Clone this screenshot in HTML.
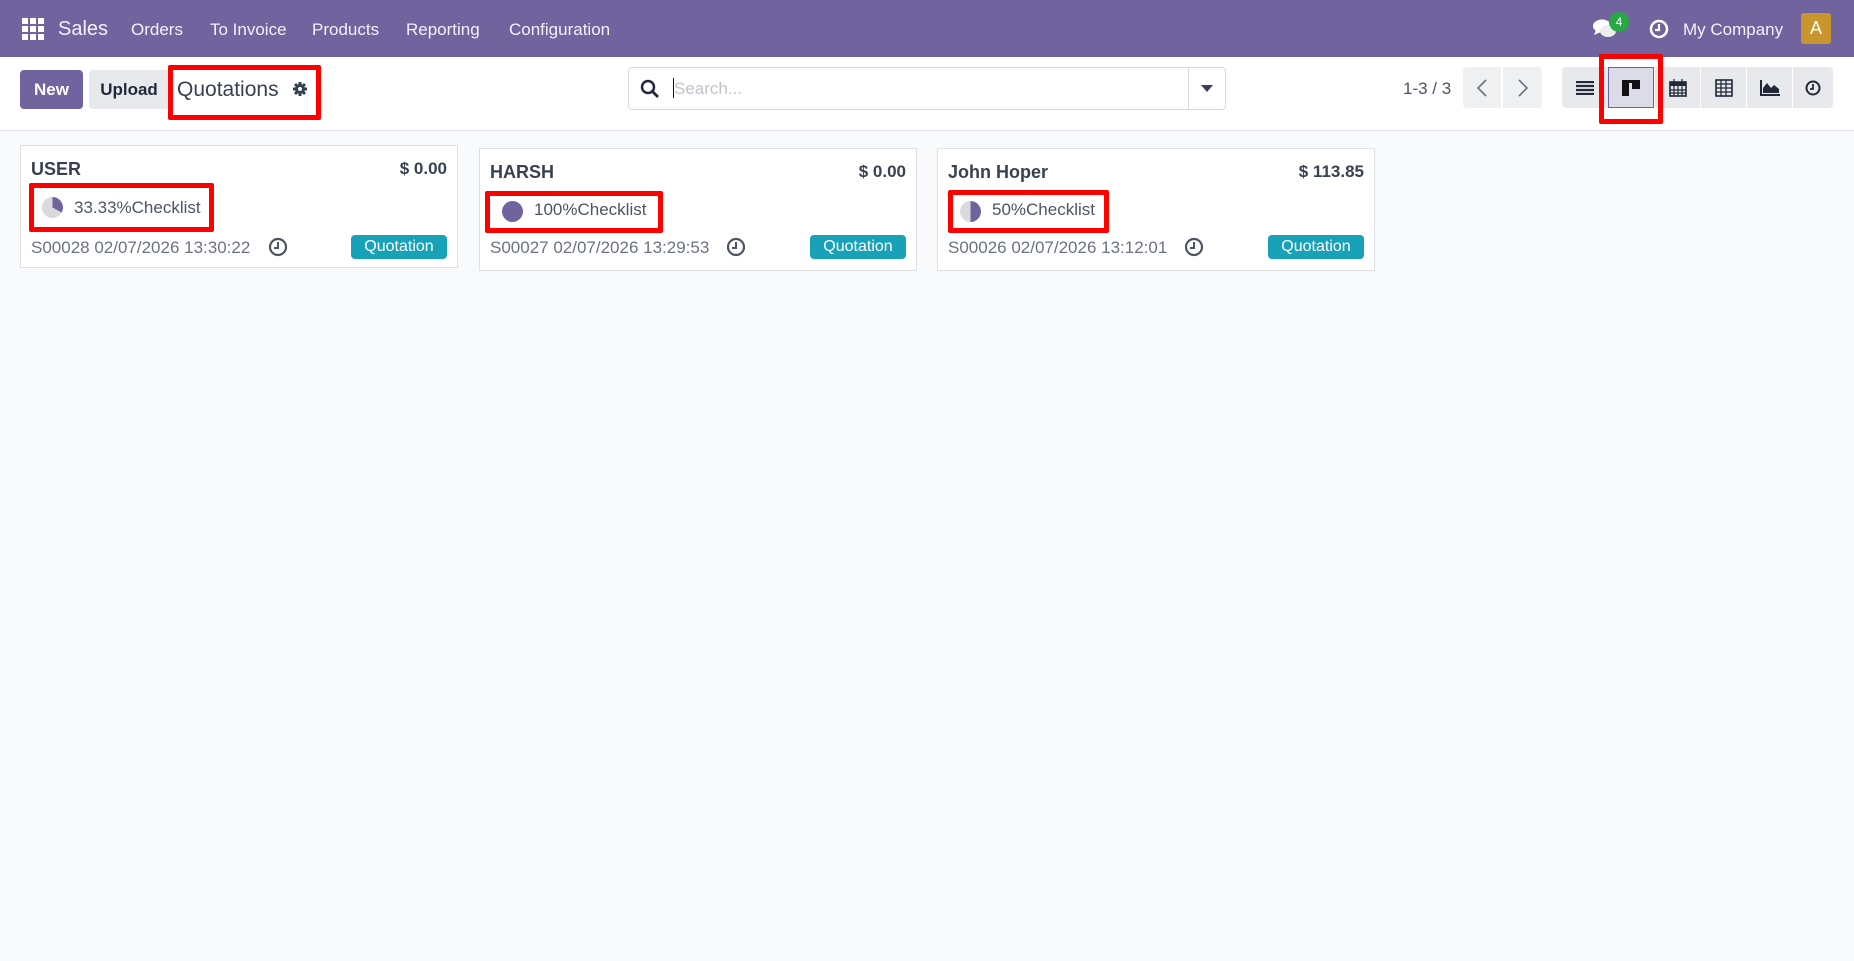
<!DOCTYPE html>
<html><head><meta charset="utf-8"><style>
*{box-sizing:border-box;margin:0;padding:0}
body{width:1854px;height:961px;background:#f9fafb;font-family:"Liberation Sans",sans-serif;position:relative;overflow:hidden;color:#374151}
.a{position:absolute}
.nav{left:0;top:0;width:1854px;height:57px;background:#71639e;color:#fff}
.nav span{position:absolute;top:20px;font-size:17px;color:#f3f0f8}
.cp{left:0;top:57px;width:1854px;height:74px;background:#fff;border-bottom:1px solid #dee2e6}
.btn{position:absolute;border-radius:4px;font-size:17px;font-weight:bold;display:flex;align-items:center;justify-content:center}
.red{position:absolute;border:5px solid #f00;border-radius:2px}
.card{position:absolute;background:#fff;border:1px solid #dcdfe3;width:438px;height:123px}
.card .n{position:absolute;left:10px;top:13px;font-size:18px;font-weight:bold;color:#374151}
.card .p{position:absolute;right:10px;top:13px;font-size:17px;font-weight:bold;color:#374151}
.card .c{position:absolute;left:54px;top:51px;font-size:17px;color:#4b5563}
.card .d{position:absolute;left:10px;top:89px;font-size:17px;color:#6b7280}
.card .q{position:absolute;right:10px;top:86px;width:96px;height:24px;background:#17a2b8;color:#fff;font-size:16px;border-radius:4px;text-align:center;line-height:24px}
.pie{position:absolute;left:22px;top:52px;width:21px;height:21px;border-radius:50%}
.vb{position:absolute;top:67px;height:41px;width:45px;background:#e7e9ed;display:flex;align-items:center;justify-content:center}
</style></head><body>
<div class="a nav">
<svg class="a" style="left:22px;top:18px" width="22" height="22" viewBox="0 0 22 22" fill="#fff"><rect x="0" y="0" width="6" height="6"/><rect x="8" y="0" width="6" height="6"/><rect x="16" y="0" width="6" height="6"/><rect x="0" y="8" width="6" height="6"/><rect x="8" y="8" width="6" height="6"/><rect x="16" y="8" width="6" height="6"/><rect x="0" y="16" width="6" height="6"/><rect x="8" y="16" width="6" height="6"/><rect x="16" y="16" width="6" height="6"/></svg>
<span style="left:58px;top:18px;font-size:20px">Sales</span>
<span style="left:131px">Orders</span>
<span style="left:210px">To Invoice</span>
<span style="left:312px">Products</span>
<span style="left:406px">Reporting</span>
<span style="left:509px">Configuration</span>
<svg class="a" style="left:1593px;top:18px" width="24" height="22" viewBox="0 0 24 22" fill="#fff"><ellipse cx="9" cy="8" rx="9" ry="6.5"/><path d="M3 12 L1 17 L8 14Z"/><ellipse cx="15" cy="13" rx="8" ry="6" fill="#eee"/></svg>
<div class="a" style="left:1609px;top:12px;width:20px;height:20px;border-radius:50%;background:#28a745;color:#fff;font-size:12px;text-align:center;line-height:20px">4</div>
<svg class="a" style="left:1649px;top:19px" width="20" height="20" viewBox="0 0 20 20"><circle cx="10" cy="10" r="8" fill="none" stroke="#fff" stroke-width="2.5"/><path d="M10 5v6H6" fill="none" stroke="#fff" stroke-width="2.2"/></svg>
<span style="left:1683px">My Company</span>
<div class="a" style="left:1801px;top:13px;width:30px;height:31px;background:#c8962c;border-radius:3px;color:#fff;font-size:18px;text-align:center;line-height:31px">A</div>
</div>
<div class="a cp"></div>
<div class="btn" style="left:20px;top:70px;width:63px;height:39px;background:#71639e;color:#fff">New</div>
<div class="btn" style="left:89px;top:70px;width:80px;height:39px;background:#e7e9ed;color:#1f2937;border-radius:4px 0 0 4px">Upload</div>
<div class="red" style="left:168px;top:65px;width:153px;height:55px"></div>
<div class="a" style="left:177px;top:78px;font-size:21px;color:#374151">Quotations</div>
<svg class="a" style="left:292px;top:81px" width="16" height="16" viewBox="0 0 16 16"><circle cx="8" cy="8" r="5" fill="#374151"/><g stroke="#374151" stroke-width="3"><path d="M8 1v14M1 8h14M3 3l10 10M13 3L3 13"/></g><circle cx="8" cy="8" r="2" fill="#fff"/></svg>
<div class="a" style="left:628px;top:67px;width:598px;height:43px;border:1px solid #d8dadd;border-radius:4px;background:#fff"></div>
<div class="a" style="left:1188px;top:68px;width:1px;height:41px;background:#d8dadd"></div>
<svg class="a" style="left:640px;top:79px" width="20" height="20" viewBox="0 0 20 20"><circle cx="8" cy="8" r="6" fill="none" stroke="#1f2937" stroke-width="2.5"/><path d="M12.5 12.5L18 18" stroke="#1f2937" stroke-width="2.8"/></svg>
<div class="a" style="left:673px;top:78px;width:1px;height:20px;background:#111"></div>
<div class="a" style="left:674px;top:79px;font-size:17px;color:#c0c4c9">Search...</div>
<svg class="a" style="left:1201px;top:85px" width="12" height="7"><path d="M0 0h12L6 7Z" fill="#374151"/></svg>
<div class="a" style="left:1403px;top:79px;font-size:17px;color:#4b5563">1-3 / 3</div>
<div class="a" style="left:1463px;top:67px;width:38px;height:41px;background:#eef0f2;border-radius:4px 0 0 4px"></div>
<div class="a" style="left:1503px;top:67px;width:39px;height:41px;background:#eef0f2;border-radius:0 4px 4px 0"></div>
<svg class="a" style="left:1475px;top:78px" width="14" height="20"><path d="M11 2L3 10l8 8" fill="none" stroke="#6b7280" stroke-width="1.6"/></svg>
<svg class="a" style="left:1516px;top:78px" width="14" height="20"><path d="M3 2l8 8-8 8" fill="none" stroke="#6b7280" stroke-width="1.6"/></svg>
<div class="vb" style="left:1562px;width:46px;border-radius:4px 0 0 4px"><svg width="18" height="14"><path d="M0 1h18M0 5h18M0 9h18M0 13h18" stroke="#1f2937" stroke-width="2.2"/></svg></div>
<div class="vb" style="left:1608px;width:46px;background:#dcdbe8;border:1px solid #71639e"><svg width="18" height="16"><rect x="0" y="0" width="18" height="3" fill="#111"/><rect x="0" y="0" width="7" height="16" fill="#111"/><rect x="10" y="0" width="8" height="9" fill="#111"/></svg></div>
<div class="vb" style="left:1654px;width:46px;border-left:1px solid #fff"><svg width="18" height="18"><rect x="1" y="3" width="16" height="14" fill="none" stroke="#1f2937" stroke-width="1.6"/><rect x="1" y="3" width="16" height="4" fill="#1f2937"/><path d="M5 0v5M13 0v5M1 11h16M1 14h16M5 7v10M9 7v10M13 7v10" stroke="#1f2937" stroke-width="1.2"/></svg></div>
<div class="vb" style="left:1700px;width:46px;border-left:1px solid #fff"><svg width="18" height="18"><rect x="1" y="1" width="16" height="16" fill="none" stroke="#1f2937" stroke-width="1.6"/><path d="M1 5h16M1 9h16M1 13h16M6 1v16M11 1v16" stroke="#1f2937" stroke-width="1.3"/></svg></div>
<div class="vb" style="left:1746px;width:46px;border-left:1px solid #fff"><svg width="20" height="16"><path d="M1 0v15h19" fill="none" stroke="#1f2937" stroke-width="2"/><path d="M3 13V8l4-5 4 5 3-3 5 4v4Z" fill="#1f2937"/></svg></div>
<div class="vb" style="left:1792px;width:41px;border-left:1px solid #fff;border-radius:0 4px 4px 0"><svg width="16" height="16"><circle cx="8" cy="8" r="6.5" fill="none" stroke="#1f2937" stroke-width="2"/><path d="M8 4v5H5" fill="none" stroke="#1f2937" stroke-width="1.8"/></svg></div>
<div class="red" style="left:1599px;top:54px;width:64px;height:70px"></div>

<div class="card" style="left:20px;top:145px">
<div class="n">USER</div><div class="p">$ 0.00</div>
<div class="pie" style="left:21px;top:51px;background:conic-gradient(#71639e 0 33%,#d9d9de 33% 100%)"></div>
<div class="c" style="left:53px;top:52px">33.33%Checklist</div>
<div class="d" style="top:92px">S00028 02/07/2026 13:30:22</div>
<svg class="a" style="left:247px;top:91px" width="20" height="20"><circle cx="10" cy="10" r="8" fill="none" stroke="#4b5563" stroke-width="2.2"/><path d="M10 5v6H6" fill="none" stroke="#4b5563" stroke-width="2"/></svg>
<div class="q" style="top:89px">Quotation</div>
</div>
<div class="red" style="left:29px;top:183px;width:185px;height:49px"></div>

<div class="card" style="left:479px;top:148px">
<div class="n">HARSH</div><div class="p">$ 0.00</div>
<div class="pie" style="background:#71639e"></div>
<div class="c">100%Checklist</div>
<div class="d">S00027 02/07/2026 13:29:53</div>
<svg class="a" style="left:246px;top:88px" width="20" height="20"><circle cx="10" cy="10" r="8" fill="none" stroke="#4b5563" stroke-width="2.2"/><path d="M10 5v6H6" fill="none" stroke="#4b5563" stroke-width="2"/></svg>
<div class="q">Quotation</div>
</div>
<div class="red" style="left:485px;top:191px;width:178px;height:42px"></div>

<div class="card" style="left:937px;top:148px">
<div class="n">John Hoper</div><div class="p">$ 113.85</div>
<div class="pie" style="background:linear-gradient(90deg,#d9d9de 50%,#71639e 50%)"></div>
<div class="c">50%Checklist</div>
<div class="d">S00026 02/07/2026 13:12:01</div>
<svg class="a" style="left:246px;top:88px" width="20" height="20"><circle cx="10" cy="10" r="8" fill="none" stroke="#4b5563" stroke-width="2.2"/><path d="M10 5v6H6" fill="none" stroke="#4b5563" stroke-width="2"/></svg>
<div class="q">Quotation</div>
</div>
<div class="red" style="left:948px;top:190px;width:161px;height:43px"></div>
</body></html>
